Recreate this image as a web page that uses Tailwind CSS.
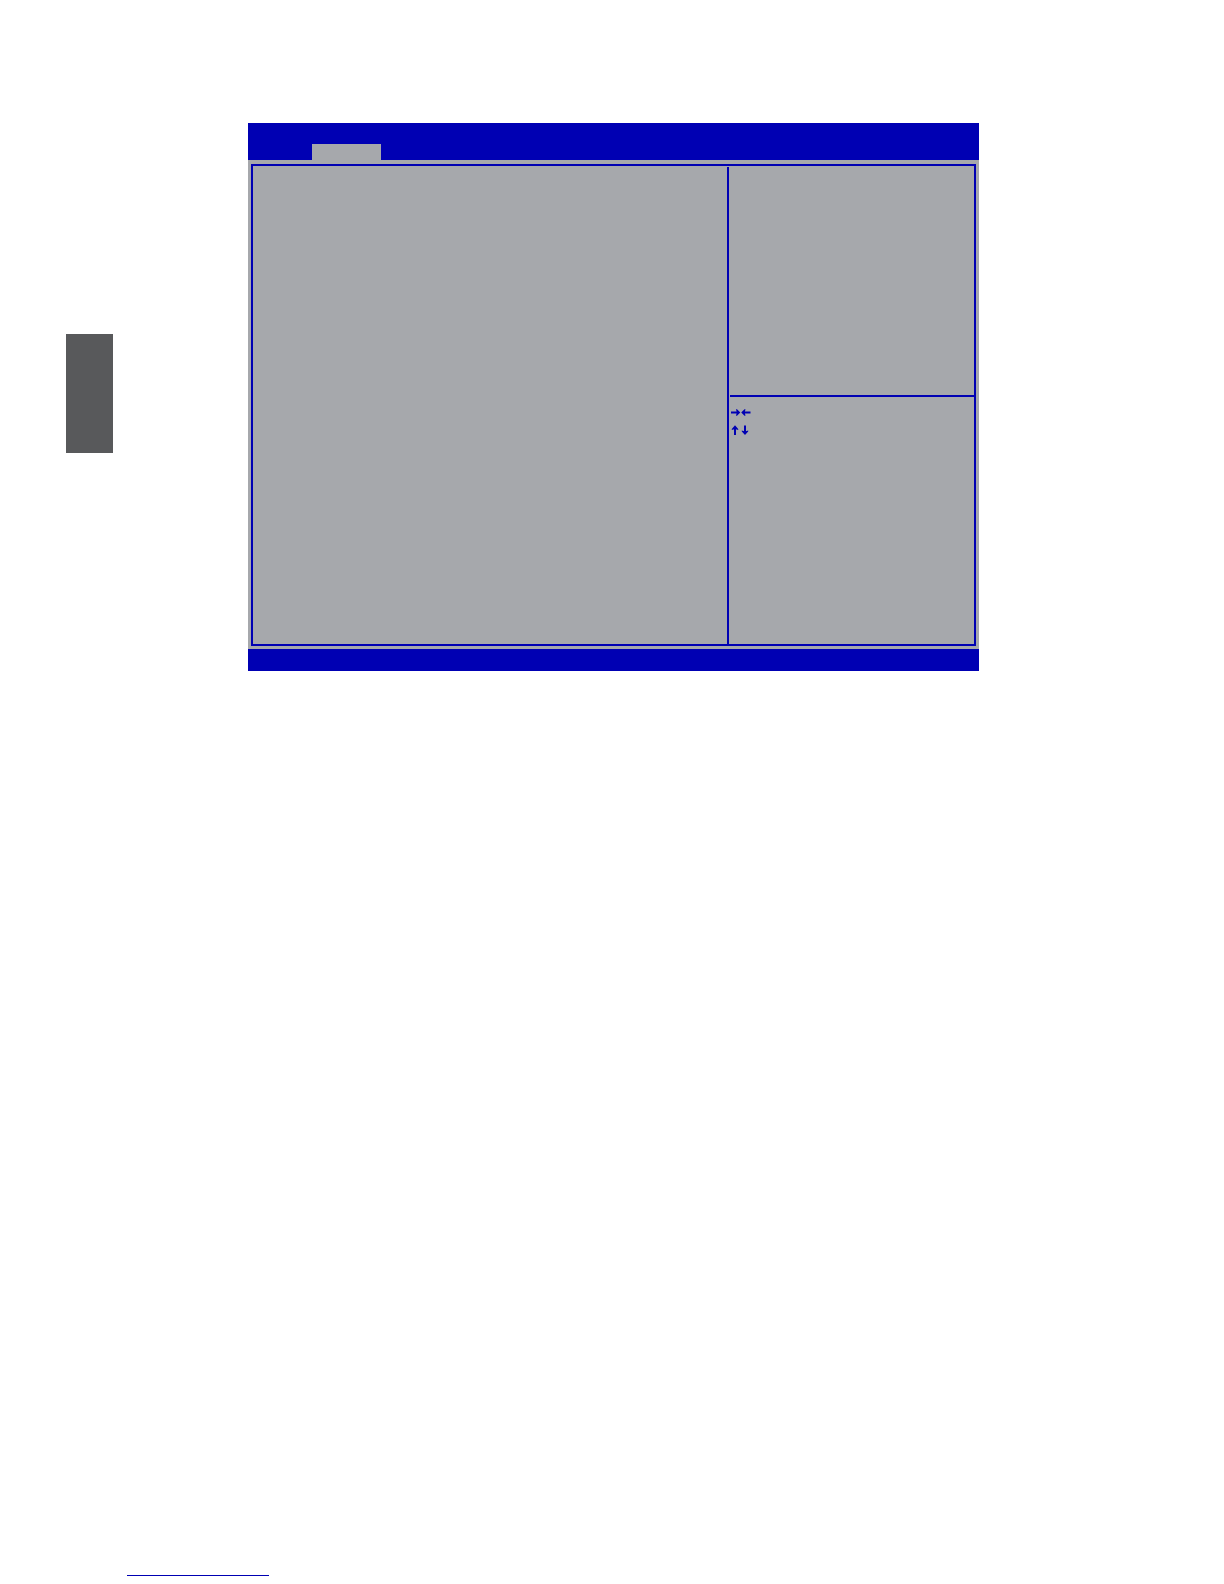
<!DOCTYPE html>
<html lang="en">
  <head>
    <meta charset="UTF-8" />
    <meta name="viewport" content="width=device-width, initial-scale=1" />
    <title>BIOS Setup</title>
    <script src="https://cdn.jsdelivr.net/npm/@tailwindcss/browser@4"></script>
  </head>
  <body class="bg-white font-sans min-h-screen flex flex-col">

    <main class="flex items-start pt-[123px] pl-[66px] pr-[245px]">

      <!-- Chapter marker -->
      <aside class="w-[47px] h-[119px] mt-[211px] shrink-0 bg-[#58595b]"></aside>

      <!-- Setup screen -->
      <section class="flex-1 ml-[135px] bg-[#a6a8ac]">

        <!-- Menu bar -->
        <nav class="h-[37px] pl-16 flex items-end bg-[#0000b3]">
          <button type="button" aria-label="Selected menu" class="w-[69px] h-4 bg-[#a6a8ac]"></button>
        </nav>

        <!-- Frame -->
        <div class="mx-[3px] mt-1 mb-[3px] min-h-[482px] flex border-2 border-[#0000b3]">
          <div class="flex-1"></div>
          <div class="w-[247px] mt-px border-l-2 border-[#0000b3] flex flex-col">
            <div class="h-[228px]"></div>
            <div class="h-[2px] ml-px bg-[#0000b3]"></div>

            <!-- Key legend -->
            <div class="pt-[6px] pl-[2px]">
              <div class="h-[18px] flex items-center">
                <svg class="w-5 h-[10px]" viewBox="0 0 20 10" fill="none" stroke="#0000b3" stroke-width="2">
                  <path d="M0 5.5H7M19.5 5.5H12.5" />
                  <path d="M5 2.2H6L9.3 5.5L6 8.8H5L5.8 5.5ZM14.5 2.2H13.5L10.2 5.5L13.5 8.8H14.5L13.7 5.5Z" fill="#0000b3" stroke="none" />
                </svg>
              </div>
              <div class="h-[18px] flex items-center">
                <svg class="w-5 h-[10px]" viewBox="0 0 20 10" fill="none" stroke="#0000b3" stroke-width="2">
                  <path d="M4 10V3M14 0.5V7" />
                  <path d="M0.8 5V4L4 0.3L7.2 4V5L4 4ZM10.8 5.5V6.5L14 10L17.2 6.5V5.5L14 6.5Z" fill="#0000b3" stroke="none" />
                </svg>
              </div>
            </div>
          </div>
        </div>

        <!-- Status bar -->
        <div class="h-[22px] bg-[#0000b3]"></div>
      </section>
    </main>

    <footer class="mt-auto pb-2 pl-[127px] flex">
      <a href="#" aria-label="Website" class="w-[142px] h-4 border-b border-[#0000b3]"></a>
    </footer>

  </body>
</html>
